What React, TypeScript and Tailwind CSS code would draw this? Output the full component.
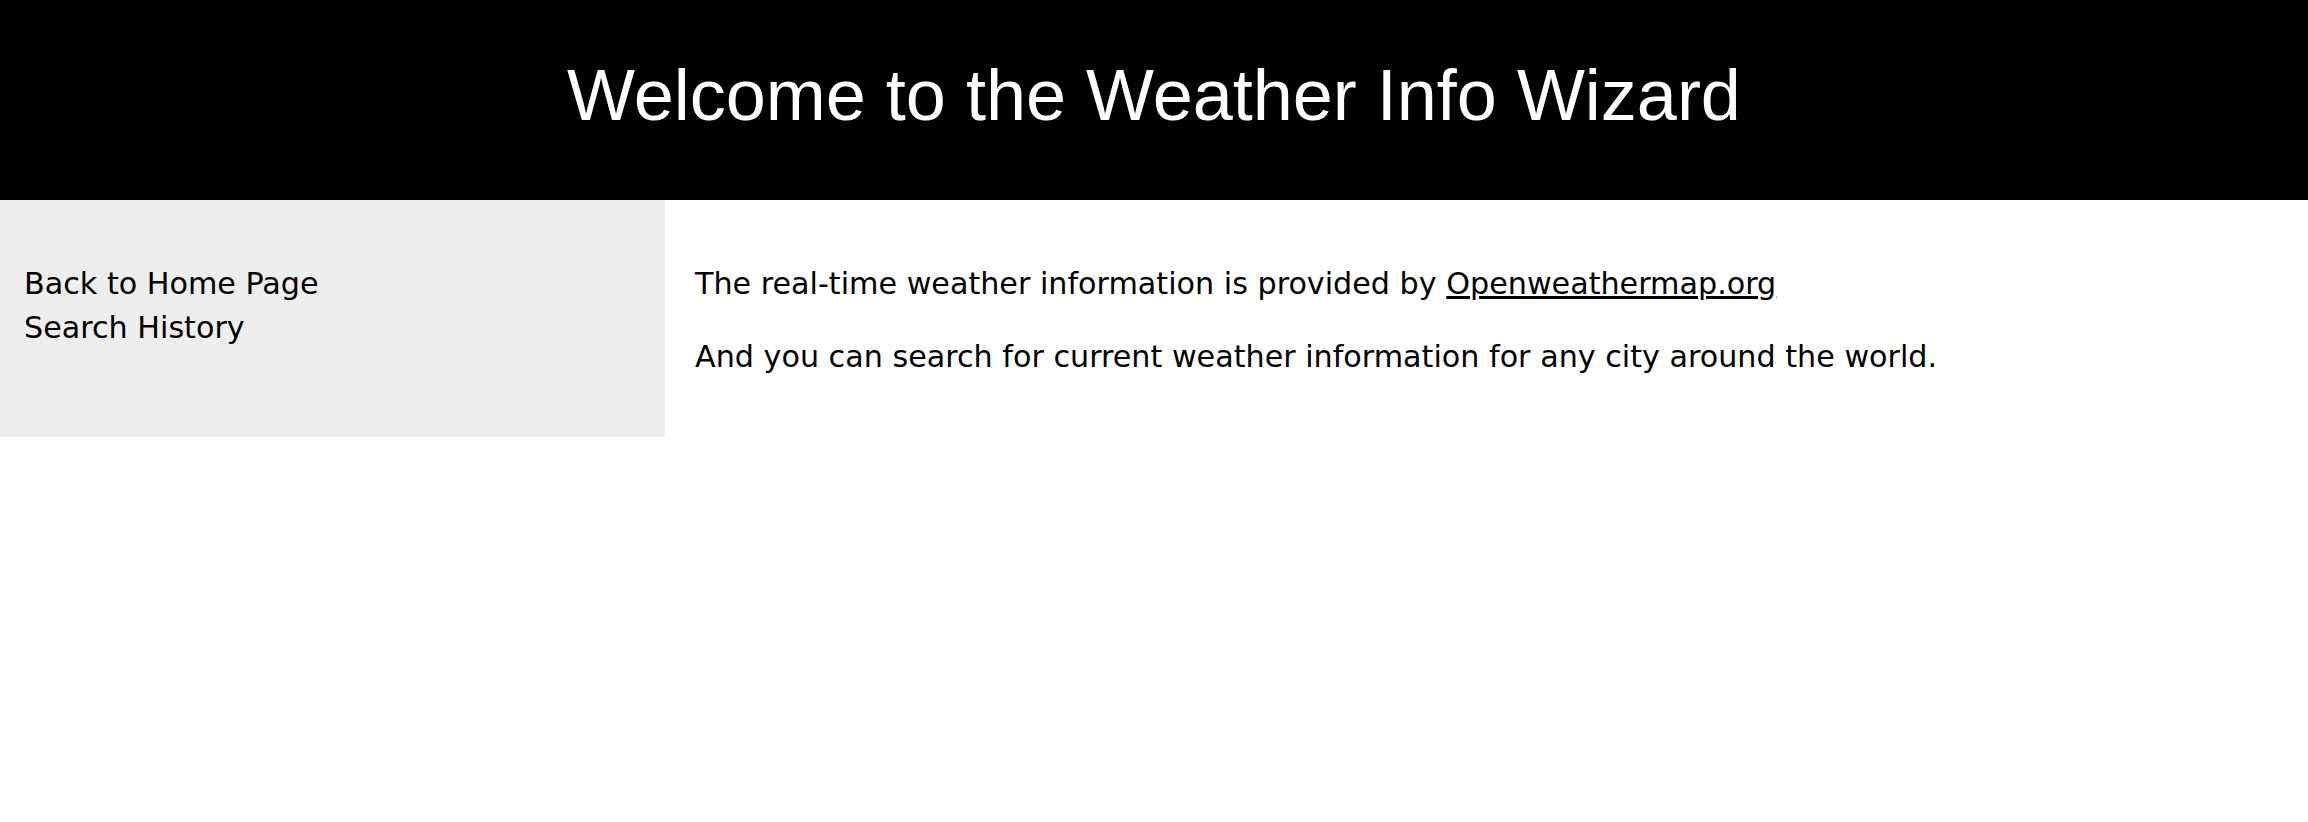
import React from "react";

export default function App() {
  return (
    <div className="min-h-[822px] bg-white">
      <header className="bg-black h-[200px] flex items-center justify-center pb-[10px]">
        <h1 className="text-white text-[72px] leading-none font-normal" style={{ fontFamily: '"Liberation Sans", Arial, sans-serif' }}>
          Welcome to the Weather Info Wizard
        </h1>
      </header>
      <div className="flex" style={{ fontFamily: '"DejaVu Sans", Verdana, sans-serif' }}>
        <nav className="w-[665px] h-[237px] bg-[#eeeeee] pl-[24px] pt-[62px] flex flex-col text-[30.2px] leading-[44px] text-black">
          <a href="#">Back to Home Page</a>
          <a href="#">Search History</a>
        </nav>
        <main className="flex-1 pl-[30px] pt-[62px] text-[30.2px] leading-[44px] text-black">
          <p>
            The real-time weather information is provided by{" "}
            <a href="#" className="underline">Openweathermap.org</a>
          </p>
          <p className="mt-[29px]">And you can search for current weather information for any city around the world.</p>
        </main>
      </div>
    </div>
  );
}
